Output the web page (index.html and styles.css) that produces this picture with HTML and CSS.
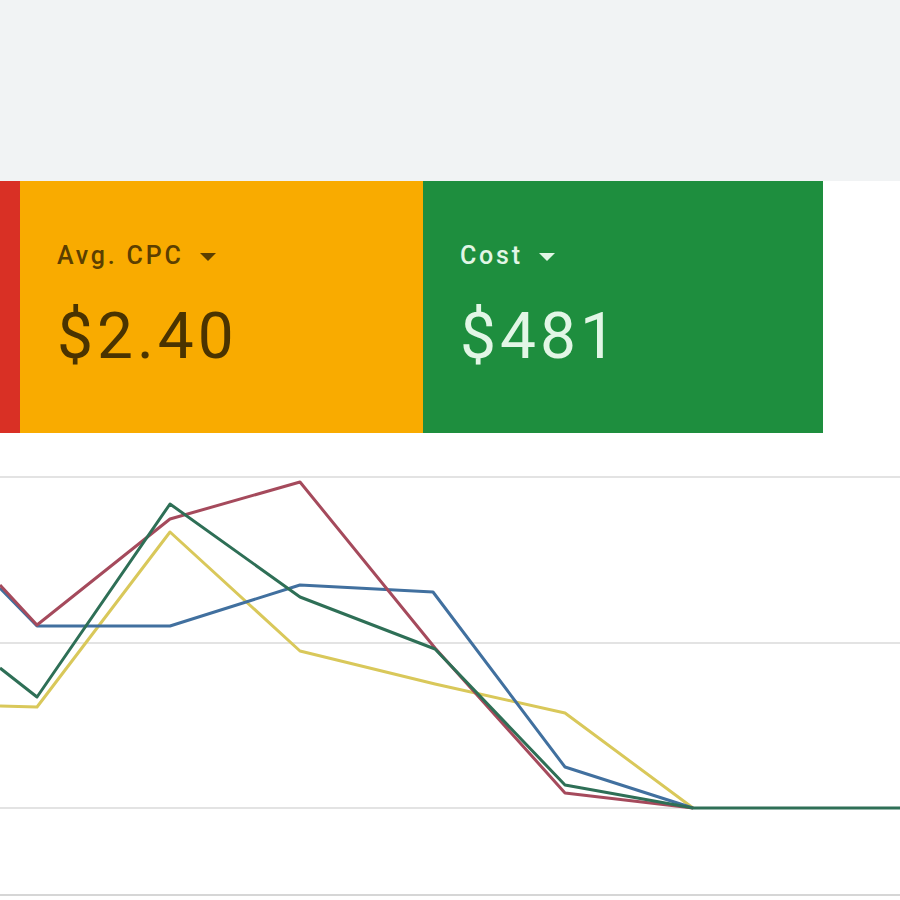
FILE: index.html
```html
<!DOCTYPE html>
<html>
  <head>
    <title>Performance overview</title>
    <link rel="stylesheet" href="styles.css">
  </head>
  <body>
    <div class="topbar"></div>

    <div class="scorecards">
      <div class="card card-red"></div>
      <div class="card card-orange">
        <div class="label">Avg. CPC <span class="caret"></span></div>
        <div class="value">$2.40</div>
      </div>
      <div class="card card-green">
        <div class="label">Cost <span class="caret"></span></div>
        <div class="value">$481</div>
      </div>
    </div>

    <svg class="chart" viewBox="0 433 900 467" width="900" height="467">
      <g class="grid">
        <line x1="0" y1="477" x2="900" y2="477" />
        <line x1="0" y1="643" x2="900" y2="643" />
        <line x1="0" y1="808" x2="900" y2="808" />
        <line class="axis" x1="0" y1="895" x2="900" y2="895" />
      </g>
      <polyline class="series yellow" points="0,706 37,707 170,532 300,651 435,684 565,713 693,808" />
      <polyline class="series blue" points="0,588 37,626 170,626 300,585 433,592 565,767 693,808" />
      <polyline class="series red" points="0,585 37,625 170,519 300,482 435,648 565,793 693,808" />
      <polyline class="series green" points="0,668 37,697 170,504 300,597 435,649 565,785 693,808 900,808" />
    </svg>
  </body>
</html>
```

FILE: styles.css
```css
body {
  margin: 0;
  background: #ffffff;
  font-family: Roboto, "Liberation Sans", Arial, sans-serif;
  overflow: hidden;
}

.topbar {
  height: 181px;
  background: #f1f3f4;
}

.scorecards {
  display: flex;
  height: 252px;
}

.card {
  box-sizing: border-box;
  padding: 60px 0 0 37px;
}

.card-red {
  width: 20px;
  padding: 0;
  background: #d93025;
}
.card-orange {
  width: 403px;
  background: #f9ab00;
  color: #5c3f00;
}
.card-green {
  width: 400px;
  background: #1e8e3e;
  color: #e2f6e6;
}

.label {
  font-size: 25px;
  font-weight: 500;
  line-height: 30px;
  letter-spacing: 2.8px;
  display: flex;
  align-items: center;
  gap: 16px;
}

.caret {
  width: 0;
  height: 0;
  border-left: 8px solid transparent;
  border-right: 8px solid transparent;
  border-top: 8px solid currentColor;
  margin-top: 1px;
}

.card-orange .value {
  color: #4a3300;
}

.value {
  margin-top: 30px;
  font-size: 64px;
  line-height: 72px;
  letter-spacing: 4px;
}

.chart {
  display: block;
}

.grid line {
  stroke: #e3e3e3;
  stroke-width: 2;
}
.grid .axis {
  stroke: #d6d6d6;
}

.series {
  fill: none;
  stroke-width: 3;
  stroke-linejoin: round;
}
.yellow {
  stroke: #d9c85a;
}
.blue {
  stroke: #41709f;
}
.red {
  stroke: #a54a5c;
}
.green {
  stroke: #2e6f56;
}
```
